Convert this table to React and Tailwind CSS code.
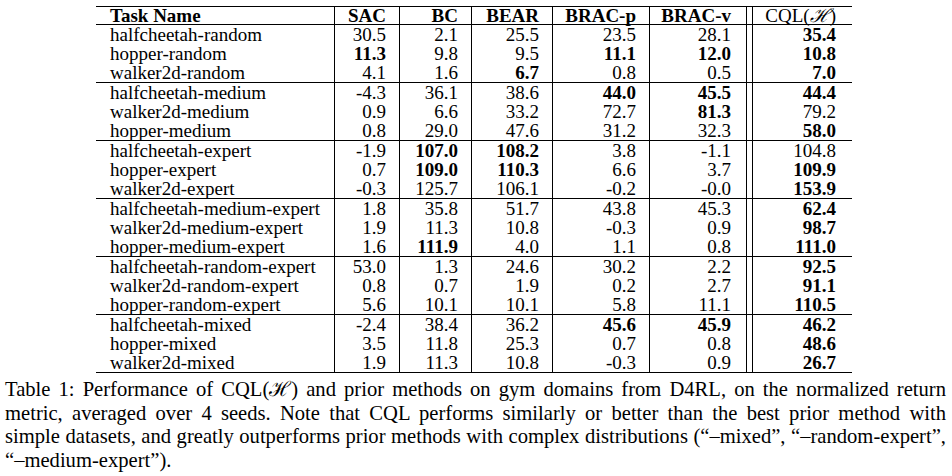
const blocks = [
  [
    ["halfcheetah-random", "30.5", "2.1", "25.5", "23.5", "28.1", "*35.4"],
    ["hopper-random", "*11.3", "9.8", "9.5", "*11.1", "*12.0", "*10.8"],
    ["walker2d-random", "4.1", "1.6", "*6.7", "0.8", "0.5", "*7.0"],
  ],
  [
    ["halfcheetah-medium", "-4.3", "36.1", "38.6", "*44.0", "*45.5", "*44.4"],
    ["walker2d-medium", "0.9", "6.6", "33.2", "72.7", "*81.3", "79.2"],
    ["hopper-medium", "0.8", "29.0", "47.6", "31.2", "32.3", "*58.0"],
  ],
  [
    ["halfcheetah-expert", "-1.9", "*107.0", "*108.2", "3.8", "-1.1", "104.8"],
    ["hopper-expert", "0.7", "*109.0", "*110.3", "6.6", "3.7", "*109.9"],
    ["walker2d-expert", "-0.3", "125.7", "106.1", "-0.2", "-0.0", "*153.9"],
  ],
  [
    ["halfcheetah-medium-expert", "1.8", "35.8", "51.7", "43.8", "45.3", "*62.4"],
    ["walker2d-medium-expert", "1.9", "11.3", "10.8", "-0.3", "0.9", "*98.7"],
    ["hopper-medium-expert", "1.6", "*111.9", "4.0", "1.1", "0.8", "*111.0"],
  ],
  [
    ["halfcheetah-random-expert", "53.0", "1.3", "24.6", "30.2", "2.2", "*92.5"],
    ["walker2d-random-expert", "0.8", "0.7", "1.9", "0.2", "2.7", "*91.1"],
    ["hopper-random-expert", "5.6", "10.1", "10.1", "5.8", "11.1", "*110.5"],
  ],
  [
    ["halfcheetah-mixed", "-2.4", "38.4", "36.2", "*45.6", "*45.9", "*46.2"],
    ["hopper-mixed", "3.5", "11.8", "25.3", "0.7", "0.8", "*48.6"],
    ["walker2d-mixed", "1.9", "11.3", "10.8", "-0.3", "0.9", "*26.7"],
  ],
];

// column boxes, border-box widths so the rules land where the picture has them
const cols = [
  "w-[65px] pr-[13px]",
  "w-[72px] pr-[13px]",
  "w-[81px] pr-[13px]",
  "w-[97px] pr-[13px]",
  "w-[97px] pr-[15px]",
];

function Num({ v }) {
  const bold = v.startsWith("*");
  return <span className={bold ? "font-bold" : ""}>{bold ? v.slice(1) : v}</span>;
}

function Row({ cells }) {
  const [name, ...nums] = cells;
  return (
    <div className="flex h-[19px]">
      <div className="w-[239px] shrink-0 border-r border-black pl-[14px]">{name}</div>
      {nums.slice(0, 5).map((v, i) => (
        <div key={i} className={`${cols[i]} shrink-0 border-r border-black text-right`}>
          <Num v={v} />
        </div>
      ))}
      <div className="w-[6px] shrink-0 border-r border-black" />
      <div className="w-[99px] shrink-0 pr-[16px] text-right">
        <Num v={nums[5]} />
      </div>
    </div>
  );
}

const lines = [
  "Table 1: Performance of CQL(ℋ) and prior methods on gym domains from D4RL, on the normalized return",
  "metric, averaged over 4 seeds.  Note that CQL performs similarly or better than the best prior method with",
  "simple datasets, and greatly outperforms prior methods with complex distributions (“–mixed”, “–random-expert”,",
];

export default function App() {
  return (
    <div className="w-[952px] h-[476px] bg-white text-black overflow-hidden font-['Liberation_Serif','Times_New_Roman','DejaVu_Serif',serif]">
      <div className="pl-[96px] pt-[6px]">
        <div className="w-[756px] border-t border-black text-[19px] leading-[19px]">
          <div className="flex h-[18px] border-b border-black font-bold">
            <div className="w-[239px] shrink-0 border-r border-black pl-[14px] -mt-[1px]">Task Name</div>
            {["SAC", "BC", "BEAR", "BRAC-p", "BRAC-v"].map((t, i) => (
              <div key={t} className={`${cols[i]} shrink-0 border-r border-black text-right -mt-[1px]`}>
                {t}
              </div>
            ))}
            <div className="w-[6px] shrink-0 border-r border-black" />
            <div className="w-[99px] shrink-0 pr-[16px] text-right font-normal -mt-[1px]">
              CQL(<span className="italic">ℋ</span>)
            </div>
          </div>
          {blocks.map((b, i) => (
            <div key={i} className="border-b border-black">
              {b.map((r) => (
                <Row key={r[0]} cells={r} />
              ))}
            </div>
          ))}
        </div>
      </div>
      <div className="mt-[5px] pl-[5px] pr-[6px] text-[20.6px] leading-[23.5px]">
        {lines.map((l) => (
          <div key={l} className="whitespace-nowrap text-justify [text-align-last:justify]">
            {l}
          </div>
        ))}
        <div>“–medium-expert”).</div>
      </div>
    </div>
  );
}
